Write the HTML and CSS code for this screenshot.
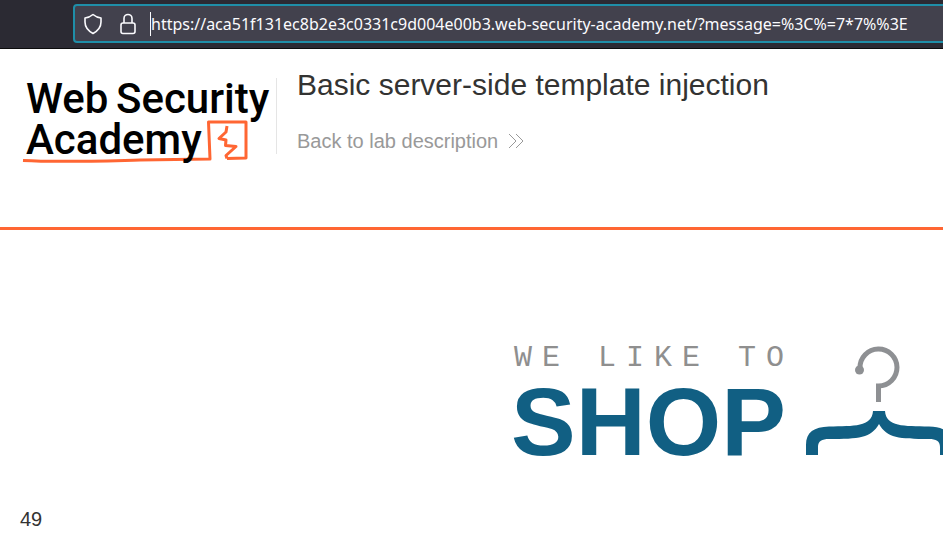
FILE: index.html
```html
<!DOCTYPE html>
<html lang="en">
<head>
<meta charset="utf-8">
<title>Basic server-side template injection</title>
<link rel="stylesheet" href="styles.css">
</head>
<body>
<div class="toolbar">
  <div class="urlbar">
    <svg class="shield" viewBox="0 0 20 22" aria-hidden="true"><path stroke-width="1.600" d="M10 1.500Q13.500 4.500 18 5V9C18 14 14.500 18 10 20.500 5.500 18 2 14 2 9V5Q6.500 4.500 10 1.500Z"/></svg>
    <svg class="lock" viewBox="0 0 18 22" aria-hidden="true"><g stroke-width="1.600"><rect x="2" y="10" width="14" height="10.500" rx="2"/><path d="M5 10V5.500a4 4 0 0 1 8 0V10"/></g></svg>
    <div class="field">
      <input class="url" type="text" aria-label="Address" spellcheck="false" value="https://aca51f131ec8b2e3c0331c9d004e00b3.web-security-academy.net/?message=%3C%=7*7%%3E">
    </div>
  </div>
</div>

<header class="lab-header">
  <a class="academy" href="#" aria-label="Web Security Academy">
    <svg viewBox="0 0 256 92" aria-hidden="true">
      <text class="academy-text" x="6" y="39">Web</text>
      <text class="academy-text" x="96" y="39">Security</text>
      <path class="mark" d="M3 86.500C40 88.500 80 87 120 86 150 85.500 170 85.500 190 85L188.500 48 226 48 226 84 207 84.500"/>
      <path class="mark" d="M207 52 206 58 199 64.500 206 66 205.500 71.500 216 72.500 206 81.500 207 84.500"/>
      <text class="academy-text" x="6" y="80">Academy</text>
    </svg>
  </a>
  <div class="lab-info">
    <h1>Basic server-side template injection</h1>
    <a class="back" href="#">Back to lab description
      <svg viewBox="0 0 16 16" aria-hidden="true"><path d="M1 1 8 8 1 15M8 1 15 8 8 15"/></svg>
    </a>
  </div>
</header>

<main>
  <div class="banner">
    <svg class="shop" viewBox="0 0 440 116" role="img" aria-label="We like to shop">
      <text class="tagline" x="0" y="22">WE LIKE TO</text>
      <text class="name" x="-3" y="111">SHOP</text>
      <path class="hook" d="M346 24A18.500 18.500 0 1 1 364.500 42V58"/>
      <circle class="knob" cx="345.500" cy="26" r="4.500"/>
      <path class="hanger" d="M292 111V101C292 88 300 83 315 82.500 340 82 358 83 359 67H371C372 83 390 82 415 82.500 430 83 438 88 438 101V111H426V103C426 97 422 95 415 95 385 95 373 94 365 80 357 94 345 95 315 95 308 95 304 97 304 103V111Z"/>
    </svg>
  </div>
  <p class="message">49</p>
</main>
</body>
</html>
```

FILE: styles.css
```css
* { box-sizing: border-box; }

body {
  margin: 0;
  background: #fff;
  color: #333332;
  font-family: "Liberation Sans", Arial, sans-serif;
  overflow-x: hidden;
}

svg { display: block; fill: none; }

.toolbar {
  height: 49px;
  padding: 4px 0 5px 73px;
  background: #2b2a33;
  border-bottom: 1px solid #0c0c0d;
}

.urlbar {
  display: flex;
  align-items: center;
  height: 39px;
  margin-right: -8px;
  padding-left: 8px;
  background: #42414d;
  border: 2px solid #1f8ea8;
  border-radius: 4px;
}

.shield, .lock {
  flex: none;
  height: 22px;
  stroke: #fbfbfe;
  stroke-linejoin: round;
}
.shield { width: 20px; }
.lock { width: 18px; margin-left: 16px; }

.field {
  flex: 1;
  margin-left: 13px;
  border-left: 1px solid #fbfbfe;
}

.url {
  display: block;
  width: 100%;
  height: 24px;
  padding: 0;
  border: 0;
  outline: 0;
  background: none;
  color: #fbfbfe;
  font: 16px "Noto Sans", "Open Sans", sans-serif;
}

.lab-header {
  display: flex;
  align-items: flex-start;
  height: 181px;
  padding: 20px 20px 0;
  border-bottom: 3px solid #ff6633;
}

.academy {
  flex: none;
  padding-top: 5px;
}
.academy svg { width: 256px; height: 92px; overflow: visible; }

.academy-text {
  fill: #000;
  font: 500 42px Roboto, sans-serif;
}

.mark { stroke: #ff6633; stroke-width: 3; stroke-linejoin: round; }

.lab-info {
  height: 76px;
  margin-top: 9px;
  padding-left: 20px;
  border-left: 1px solid #e5e5e5;
}

h1 {
  margin: -11px 0 0;
  font-size: 30px;
  font-weight: 400;
  line-height: 36px;
}

.back {
  display: flex;
  align-items: center;
  gap: 10px;
  margin-top: 26px;
  color: #999;
  font-size: 20px;
  line-height: 24px;
  text-decoration: none;
}
.back svg { width: 16px; height: 16px; stroke: #999; }

.banner {
  padding: 114px 0 0 514px;
  overflow: hidden;
}
.shop { width: 440px; height: 116px; overflow: visible; }

.tagline {
  fill: #8f8f8f;
  font: 30px "Liberation Mono", monospace;
  letter-spacing: 10px;
}
.name { fill: #115f83; font: bold 97px "Liberation Sans", Arial, sans-serif; }
.hook { stroke: #8e9093; stroke-width: 5; }
.knob { fill: #8e9093; }
.hanger { fill: #115f83; }

.message {
  margin: 47px 20px 0;
  font-size: 20px;
  line-height: 24px;
}
```
